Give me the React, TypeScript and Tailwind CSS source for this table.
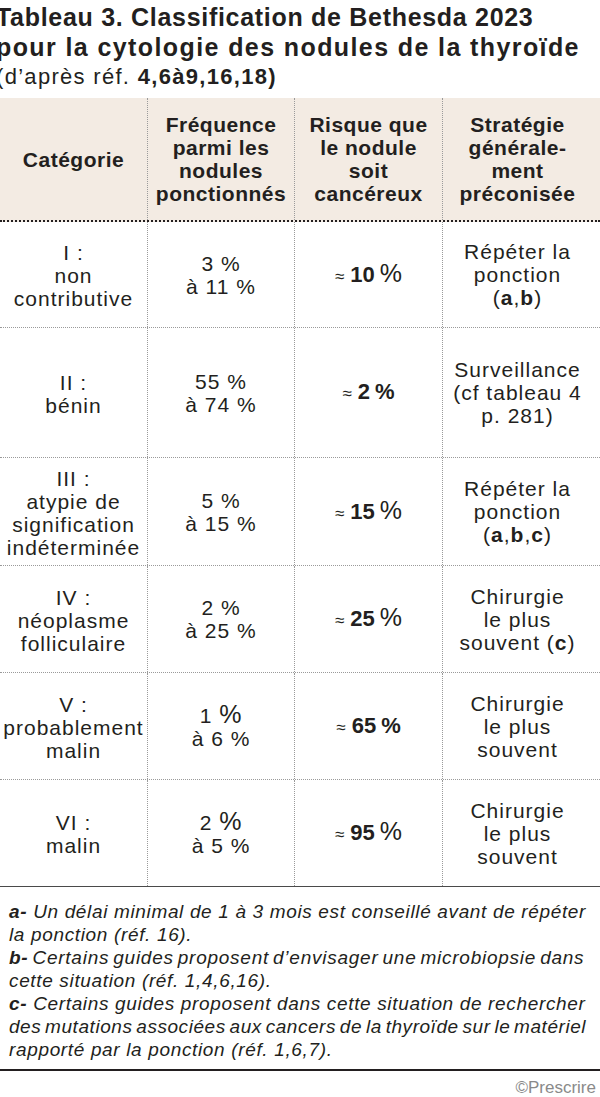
import type { ReactNode } from "react";

type Row = {
  cat: string[];
  freq: [ReactNode, ReactNode];
  risk: ReactNode;
  strat: ReactNode[];
  h: string;
};

const pctReg = <span className="ml-[5px] text-[25px] font-normal">%</span>;
const pctBold = <span className="ml-[5px]">%</span>;

const ROWS: Row[] = [
  {
    cat: ["I :", "non", "contributive"],
    freq: ["3 %", "à 11 %"],
    risk: <>10{pctReg}</>,
    strat: ["Répéter la", "ponction", <>(<b>a</b>,<b>b</b>)</>],
    h: "h-[106px]",
  },
  {
    cat: ["II :", "bénin"],
    freq: ["55 %", "à 74 %"],
    risk: <>2{pctBold}</>,
    strat: ["Surveillance", "(cf tableau 4", "p. 281)"],
    h: "h-[130px]",
  },
  {
    cat: ["III :", "atypie de", "signification", "indéterminée"],
    freq: ["5 %", "à 15 %"],
    risk: <>15{pctReg}</>,
    strat: ["Répéter la", "ponction", <>(<b>a</b>,<b>b</b>,<b>c</b>)</>],
    h: "h-[108px]",
  },
  {
    cat: ["IV :", "néoplasme", "folliculaire"],
    freq: ["2 %", "à 25 %"],
    risk: <>25{pctReg}</>,
    strat: ["Chirurgie", "le plus", <>souvent (<b>c</b>)</>],
    h: "h-[107px]",
  },
  {
    cat: ["V :", "probablement", "malin"],
    freq: [<>1 <span className="text-[25px]">%</span></>, "à 6 %"],
    risk: <>65{pctBold}</>,
    strat: ["Chirurgie", "le plus", "souvent"],
    h: "h-[107px]",
  },
  {
    cat: ["VI :", "malin"],
    freq: [<>2 <span className="text-[25px]">%</span></>, "à 5 %"],
    risk: <>95{pctReg}</>,
    strat: ["Chirurgie", "le plus", "souvent"],
    h: "h-[107px]",
  },
];

/* notes : une ligne par ligne de la source, pour garder la même coupure */
const NOTES: { text: ReactNode; cls: string }[] = [
  { text: <><b>a-</b> Un délai minimal de 1 à 3 mois est conseillé avant de répéter</>, cls: "tracking-[0.65px]" },
  { text: "la ponction (réf. 16).", cls: "tracking-[0.65px]" },
  { text: <><b>b-</b> Certains guides proposent d’envisager une microbiopsie dans</>, cls: "tracking-[0.75px] [word-spacing:-2px]" },
  { text: "cette situation (réf. 1,4,6,16).", cls: "tracking-[0.65px]" },
  { text: <><b>c-</b> Certains guides proposent dans cette situation de rechercher</>, cls: "tracking-[0.65px]" },
  { text: "des mutations associées aux cancers de la thyroïde sur le matériel", cls: "tracking-[0.55px] [word-spacing:-2px]" },
  { text: "rapporté par la ponction (réf. 1,6,7).", cls: "tracking-[0.65px]" },
];

function Lines({ items }: { items: ReactNode[] }) {
  return (
    <>
      {items.map((line, i) => (
        <span key={i} className="whitespace-nowrap">
          {line}
        </span>
      ))}
    </>
  );
}

const cell =
  "flex flex-col items-center justify-center text-center leading-[23px]";
const divider = "border-r border-dotted border-[#9a9a9a]";

export default function App() {
  return (
    <div className="w-[600px] overflow-hidden bg-white font-['Liberation_Sans',Arial,sans-serif] text-[#231f20]">
      {/* titre */}
      <div className="-ml-[4px] pt-[2px]">
        <h1 className="whitespace-nowrap text-[25px] font-bold leading-[30px]">
          <span className="block tracking-[0.7px]">Tableau 3. Classification de Bethesda 2023</span>
          <span className="block tracking-[1.4px]">pour la cytologie des nodules de la thyroïde</span>
        </h1>
        <p className="whitespace-nowrap text-[22px] leading-[30px] tracking-[1.3px]">
          (d’après réf. <b>4,6à9,16,18)</b>
        </p>
      </div>

      {/* tableau */}
      <div className="mt-[6px] grid grid-cols-[148px_147px_148px_1fr]">
        <div className="col-span-4 grid h-[124px] grid-cols-subgrid border-b-2 border-dotted border-[#231f20] bg-[#f3ebe3] text-[21px] font-bold tracking-[0.5px]">
          <div className={`${cell} ${divider}`}>Catégorie</div>
          <div className={`${cell} ${divider}`}>
            <Lines items={["Fréquence", "parmi les", "nodules", "ponctionnés"]} />
          </div>
          <div className={`${cell} ${divider}`}>
            <Lines items={["Risque que", "le nodule", "soit", "cancéreux"]} />
          </div>
          <div className={`${cell} pr-[8px]`}>
            <Lines items={["Stratégie", "générale-", "ment", "préconisée"]} />
          </div>
        </div>

        {ROWS.map((row, i) => (
          <div
            key={i}
            className={`col-span-4 grid grid-cols-subgrid ${row.h} text-[21px] tracking-[1px] ${
              i === ROWS.length - 1
                ? "border-b border-solid border-[#4a4a4a]"
                : "border-b border-dotted border-[#9a9a9a]"
            }`}
          >
            <div className={`${cell} ${divider} pt-[2px]`}>
              <Lines items={row.cat} />
            </div>
            <div className={`${cell} ${divider}`}>
              <Lines items={row.freq} />
            </div>
            <div className={`${cell} ${divider}`}>
              <span className="whitespace-nowrap text-[22px] font-bold tracking-normal">
                <span className="mr-[6px] text-[17px] font-normal">≈</span>
                {row.risk}
              </span>
            </div>
            <div className={`${cell} pr-[8px]`}>
              <Lines items={row.strat} />
            </div>
          </div>
        ))}
      </div>

      {/* notes */}
      <div className="border-b-2 border-[#231f20] pb-[8px] pl-[9px] pt-[13px] text-[19px] italic leading-[23px]">
        {NOTES.map((note, i) => (
          <p key={i} className={`whitespace-nowrap ${note.cls}`}>
            {note.text}
          </p>
        ))}
      </div>

      <div className="pr-[4px] pt-[5px] text-right text-[17px] leading-[24px] text-[#8a8a8a]">
        ©Prescrire
      </div>
    </div>
  );
}
